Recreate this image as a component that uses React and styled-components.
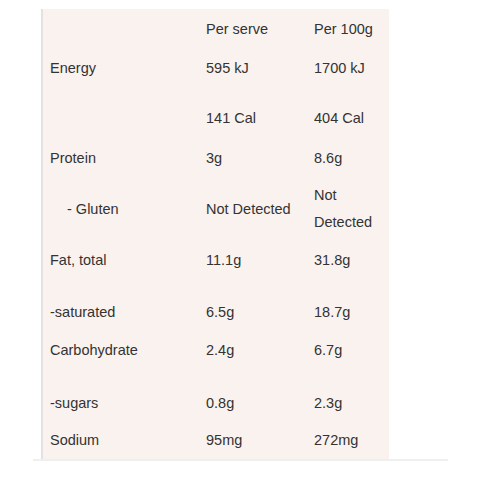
import React from 'react';
import styled, { createGlobalStyle } from 'styled-components';

const GlobalStyle = createGlobalStyle`
  body {
    margin: 0;
    background: #ffffff;
    font-family: "Liberation Sans", Arial, sans-serif;
  }
`;

const Wrapper = styled.div`
  margin: 0 0 0 33px;
  width: 415px;
  padding-top: 9px;
  border-bottom: 2px solid #efefef;
`;

const Panel = styled.div`
  margin-left: 8px;
  width: 346px;
  background-color: #faf2ee;
  border-left: 2px solid #e2e2e2;
`;

const Row = styled.div`
  display: grid;
  grid-template-columns: 156px 108px 82px;
  align-items: ${(p) => (p.$center ? 'center' : 'start')};
  height: ${(p) => p.$h}px;
`;

const Cell = styled.div`
  padding: 7px 6px 6px ${(p) => (p.$indent ? 24 : 7)}px;
  font-size: 14.5px;
  line-height: 27px;
  color: #333333;
`;

const rows = [
  { h: 39, cells: ['', 'Per serve', 'Per 100g'] },
  { h: 50, cells: ['Energy', '595 kJ', '1700 kJ'] },
  { h: 40, cells: ['', '141 Cal', '404 Cal'] },
  { h: 37, cells: ['Protein', '3g', '8.6g'] },
  { h: 65, cells: ['- Gluten', 'Not Detected', 'Not Detected'], center: true, indent: true },
  { h: 52, cells: ['Fat, total', '11.1g', '31.8g'] },
  { h: 38, cells: ['-saturated', '6.5g', '18.7g'] },
  { h: 53, cells: ['Carbohydrate', '2.4g', '6.7g'] },
  { h: 37, cells: ['-sugars', '0.8g', '2.3g'] },
  { h: 39, cells: ['Sodium', '95mg', '272mg'] },
];

const App = () => (
  <>
    <GlobalStyle />
    <Wrapper>
      <Panel>
        {rows.map((row, i) => (
          <Row key={i} $h={row.h} $center={row.center}>
            {row.cells.map((c, j) => (
              <Cell key={j} $indent={row.indent && j === 0}>
                {c}
              </Cell>
            ))}
          </Row>
        ))}
      </Panel>
    </Wrapper>
  </>
);

export default App;
